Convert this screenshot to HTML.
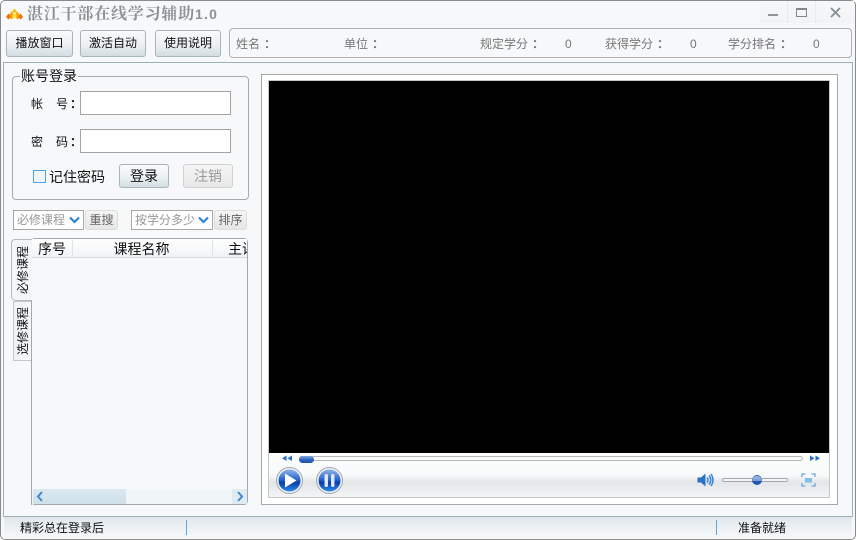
<!DOCTYPE html>
<html lang="zh"><head><meta charset="utf-8"><title>湛江干部在线学习辅助1.0</title>
<style>
*{box-sizing:border-box}
html,body{margin:0;padding:0;width:856px;height:540px;overflow:hidden;background:#fff}
body{font-family:"Liberation Sans","WenQuanYi Zen Hei","Noto Sans CJK SC",sans-serif;font-size:12px;color:#111}
.a{position:absolute}
.t{position:absolute;white-space:nowrap;line-height:16px}
.c{font-family:"Noto Sans CJK TC",sans-serif;font-weight:700;margin-left:4px}
.btn{position:absolute;border:1px solid #a9b3b8;border-radius:3px;background:linear-gradient(#f8fafb,#eef2f4 50%,#d3dde2);text-align:center;font-size:12px;color:#111}
.g{color:#777}
.dis{color:#999}
.inp{position:absolute;background:#fff;border:1px solid #a3a3a3;left:80px;width:151px;height:24px}
.combo{position:absolute;background:#fff;border:1px solid #a8a8a8;height:20px;top:210px;color:#999;line-height:18px;padding-left:3px;font-size:12px;white-space:nowrap}
.side{position:absolute;width:50px;height:16px;line-height:16px;transform:rotate(-90deg);text-align:center;font-size:12px;white-space:nowrap}
.hd{position:absolute;top:241px;height:18px;line-height:17px;font-size:14px;text-align:center;white-space:nowrap;overflow:hidden}
</style></head><body>
<div class="a" id="win" style="left:0;top:0;width:856px;height:540px;background:#f6f8fa;border:1px solid #8a8a8a;border-radius:5px;overflow:hidden"></div>

<svg class="a" style="left:6px;top:8px" width="17" height="13" viewBox="0 0 17 13"><path d="M8.500 0.500 11.500 4.500H5.500z" fill="#f9bd00"/><path d="M5.500 3.500 8.500 8 5.500 11.500 2.500 8zM11.500 3.500 14.500 8 11.500 11.500 8.500 8z" fill="#f9a400"/><path d="M2.500 5.500 5 9 2.500 11.500 0 9zM14.500 5.500 17 9 14.500 11.500 12 9z" fill="#f07400"/><path d="M8.500 4.500 11 8 8.500 11 6 8z" fill="#ffe040"/></svg>
<div class="t" style="left:27px;top:6px;font-family:'Liberation Serif','Noto Serif CJK SC',serif;font-weight:700;font-size:16px;color:#8b9195;letter-spacing:.8px;line-height:17px">湛江干部在线学习辅助<span style="font-family:'Liberation Sans',sans-serif;font-size:14px;letter-spacing:1.200px">1.0</span></div>

<div class="a" style="left:760px;top:1px;width:94px;height:22px;background:linear-gradient(#f6f8fa,#f1f3f5)"></div>
<div class="a" style="left:787px;top:1px;width:1px;height:22px;background:#e8eaec"></div>
<div class="a" style="left:815px;top:1px;width:1px;height:22px;background:#e8eaec"></div>
<div class="a" style="left:768px;top:14px;width:10px;height:2px;background:#8e979c"></div>
<div class="a" style="left:796px;top:8px;width:11px;height:9px;border:1px solid #7f8a90;border-top:2px solid #7f8a90"></div>
<svg class="a" style="left:830px;top:7px" width="11" height="11" viewBox="0 0 11 11"><path d="M1 1 10 10M10 1 1 10" stroke="#848e94" stroke-width="1.800" fill="none"/></svg>

<div class="btn" style="left:6px;top:30px;width:67px;height:27px;line-height:25px">播放窗口</div>
<div class="btn" style="left:80px;top:30px;width:66px;height:27px;line-height:25px">激活自动</div>
<div class="btn" style="left:155px;top:30px;width:66px;height:27px;line-height:25px">使用说明</div>

<div class="a" style="left:229px;top:28px;width:623px;height:30px;border:1px solid #aeb0b2;border-radius:4px;background:#f6f8fa"></div>
<div class="t g" style="left:236px;top:36px">姓名<span class="c">：</span></div>
<div class="t g" style="left:344px;top:36px">单位<span class="c">：</span></div>
<div class="t g" style="left:480px;top:36px">规定学分<span class="c">：</span></div>
<div class="t g" style="left:565px;top:36px">0</div>
<div class="t g" style="left:605px;top:36px">获得学分<span class="c">：</span></div>
<div class="t g" style="left:690px;top:36px">0</div>
<div class="t g" style="left:728px;top:36px">学分排名<span class="c">：</span></div>
<div class="t g" style="left:813px;top:36px">0</div>

<div class="a" style="left:3px;top:62px;width:850px;height:455px;border:1px solid #9db0b8;background:#f6f8fa"></div>

<div class="a" style="left:12px;top:76px;width:237px;height:124px;border:1px solid #a8abad;border-radius:4px"></div>
<div class="t" style="left:20px;top:68px;background:#f6f8fa;padding:0 1px;font-size:14px">账号登录</div>
<div class="t" style="left:31px;top:96px">帐</div><div class="t" style="left:56px;top:96px">号<span class="c" style="margin-left:2px">：</span></div>
<div class="inp" style="top:91px"></div>
<div class="t" style="left:31px;top:134px">密</div><div class="t" style="left:56px;top:134px">码<span class="c" style="margin-left:2px">：</span></div>
<div class="inp" style="top:129px"></div>
<div class="a" style="left:33px;top:170px;width:13px;height:13px;border:1.500px solid #4ea5e6;background:#f2f6f8"></div>
<div class="t" style="left:49px;top:169px;font-size:14px">记住密码</div>
<div class="btn" style="left:119px;top:164px;width:50px;height:24px;line-height:22px;font-size:14px">登录</div>
<div class="btn dis" style="left:183px;top:164px;width:50px;height:24px;line-height:22px;font-size:14px;background:linear-gradient(#f5f5f5,#e8e8e8);border-color:#d0d0d0">注销</div>

<div class="combo" style="left:13px;width:71px">必修课程</div>
<svg class="a" style="left:69px;top:216px" width="11" height="8" viewBox="0 0 11 8"><path d="M1 1.500 5.500 6 10 1.500" stroke="#2f83d0" stroke-width="2.200" fill="none"/></svg>
<div class="btn" style="left:85px;top:210px;width:33px;height:20px;line-height:18px;color:#666;border-color:#ddd;background:linear-gradient(#f5f5f5,#e6e6e6)">重搜</div>
<div class="combo" style="left:131px;width:82px">按学分多少</div>
<svg class="a" style="left:198px;top:216px" width="11" height="8" viewBox="0 0 11 8"><path d="M1 1.500 5.500 6 10 1.500" stroke="#2f83d0" stroke-width="2.200" fill="none"/></svg>
<div class="btn" style="left:214px;top:210px;width:33px;height:20px;line-height:18px;color:#666;border-color:#ddd;background:linear-gradient(#f5f5f5,#e6e6e6)">排序</div>

<div class="a" style="left:31px;top:238px;width:217px;height:267px;border:1px solid #a3a8ab;border-radius:4px;background:#f6f8fa;overflow:hidden"></div>
<div class="a" style="left:32px;top:239px;width:215px;height:19px;background:linear-gradient(#fff,#f0f3f5);border-bottom:1px solid #d4d9dc"></div>
<div class="a" style="left:72px;top:240px;width:1px;height:17px;background:#e0e4e6"></div>
<div class="a" style="left:212px;top:240px;width:1px;height:17px;background:#e0e4e6"></div>
<div class="hd" style="left:32px;width:40px">序号</div>
<div class="hd" style="left:72px;width:139px">课程名称</div>
<div class="hd" style="left:228px;width:19px;text-align:left">主讲</div>

<div class="a" style="left:13px;top:301px;width:19px;height:60px;background:linear-gradient(90deg,#f0f3f5,#f6f8fa);border:1px solid #c4c8ca;border-right:0"></div>
<div class="a" style="left:31px;top:301px;width:1px;height:204px;background:#a3a8ab"></div>
<div class="a" style="left:11px;top:239px;width:21px;height:62px;background:#f3f6f8;border:1px solid #b5babd;border-right:0;border-radius:4px 0 0 5px"></div>
<div class="side" style="left:-2px;top:262px">必修课程</div>
<div class="side" style="left:-2px;top:323px">选修课程</div>

<div class="a" style="left:32px;top:489px;width:215px;height:15px;background:#f0f5f8"></div>
<div class="a" style="left:33px;top:489px;width:93px;height:15px;background:linear-gradient(#dbe8f0,#cfe0ea)"></div>
<div class="a" style="left:232px;top:489px;width:15px;height:15px;background:#dfeaf1"></div>
<svg class="a" style="left:35px;top:491px" width="10" height="11" viewBox="0 0 10 11"><path d="M7 1 3 5.500 7 10" stroke="#3d8bcf" stroke-width="2" fill="none"/></svg>
<svg class="a" style="left:235px;top:491px" width="10" height="11" viewBox="0 0 10 11"><path d="M3 1 7 5.500 3 10" stroke="#3d8bcf" stroke-width="2" fill="none"/></svg>

<div class="a" style="left:261px;top:74px;width:577px;height:431px;border:1px solid #a5a9ab;background:#fff"></div>
<div class="a" style="left:268px;top:80px;width:562px;height:418px;border:1px solid #c4c7c9;background:#fff"></div>
<div class="a" style="left:269px;top:81px;width:560px;height:372px;background:#000"></div>
<div class="a" style="left:269px;top:454px;width:560px;height:43px;background:linear-gradient(#fcfdfd 0,#f8f9fa 50%,#e3e6e8 65%,#f3f4f5 100%)"></div>
<svg class="a" style="left:281px;top:455px" width="12" height="7" viewBox="0 0 12 7"><path d="M5.500 0.500V6L1 3.250zM11 0.500V6L6.500 3.250z" fill="#2a6fc4"/></svg>
<div class="a" style="left:299px;top:456px;width:504px;height:5px;border:1px solid #b6b9bb;border-radius:3px;background:#fafafa"></div>
<div class="a" style="left:299px;top:456px;width:15px;height:7px;border-radius:4px;background:linear-gradient(#7fa6dd,#2d62bd 55%,#1f4fa5)"></div>
<svg class="a" style="left:809px;top:455px" width="12" height="7" viewBox="0 0 12 7"><path d="M1 .5V6L5.500 3.250zM6.500 .5V6L11 3.250z" fill="#2a6fc4"/></svg>

<svg class="a" style="left:275px;top:466px" width="70" height="28" viewBox="0 0 70 28">
<defs><linearGradient id="b" x1="0" y1="0" x2="0" y2="1"><stop offset="0" stop-color="#8fb3ea"/><stop offset=".45" stop-color="#2a66cd"/><stop offset=".6" stop-color="#0b3ea8"/><stop offset="1" stop-color="#2b8ae8"/></linearGradient></defs>
<circle cx="14.500" cy="14.500" r="13" fill="#eef1f4" stroke="#9ea8b2"/><circle cx="14.500" cy="14.500" r="11" fill="url(#b)"/><path d="M10 7.500 21.500 14.500 10 21.500z" fill="#fff"/>
<circle cx="54.500" cy="14.500" r="13" fill="#eef1f4" stroke="#9ea8b2"/><circle cx="54.500" cy="14.500" r="11" fill="url(#b)"/><rect x="49.500" y="8" width="3.500" height="13" rx="1.500" fill="#dfe8f5"/><rect x="56" y="8" width="3.500" height="13" rx="1.500" fill="#dfe8f5"/>
</svg>
<svg class="a" style="left:697px;top:473px" width="17" height="14" viewBox="0 0 17 14"><path d="M0.500 4.500H4L8.500 .5V13.500L4 9.500H0.500z" fill="#2a72c8"/><path d="M10 4.500Q12 7 10 9.500M12 2.500Q15.500 7 12 11.500M14 1Q18 7 14 13" stroke="#3a82d2" stroke-width="1.500" fill="none"/></svg>
<div class="a" style="left:722px;top:478px;width:66px;height:4px;border:1px solid #a5aaae;border-radius:2px;background:#f2f3f4"></div>
<svg class="a" style="left:752px;top:475px" width="10" height="10" viewBox="0 0 10 10"><circle cx="5" cy="5" r="5" fill="#1f55b5"/><path d="M0.300 4A5 5 0 0 1 9.700 4z" fill="#8fadd9"/><rect x="0.500" y="4.500" width="9" height="1" fill="#e6ecf5"/></svg>
<svg class="a" style="left:801px;top:473px" width="15" height="14" viewBox="0 0 15 14"><path d="M1 4V1H4.500M10.500 1H14V4M14 10V13H10.500M4.500 13H1V10" stroke="#6aa9d8" stroke-width="1.300" fill="none"/><rect x="4" y="5" width="7" height="4.500" fill="#7ec0ea"/></svg>

<div class="a" style="left:4px;top:517px;width:848px;height:22px;background:linear-gradient(#e0e7eb,#f3f6f8 80%,#f6f8fa)"></div>
<div class="t" style="left:20px;top:520px">精彩总在登录后</div>
<div class="a" style="left:186px;top:520px;width:1px;height:15px;background:#5fa6dc"></div>
<div class="a" style="left:716px;top:520px;width:1px;height:15px;background:#5fa6dc"></div>
<div class="t" style="left:738px;top:520px">准备就绪</div>
</body></html>
